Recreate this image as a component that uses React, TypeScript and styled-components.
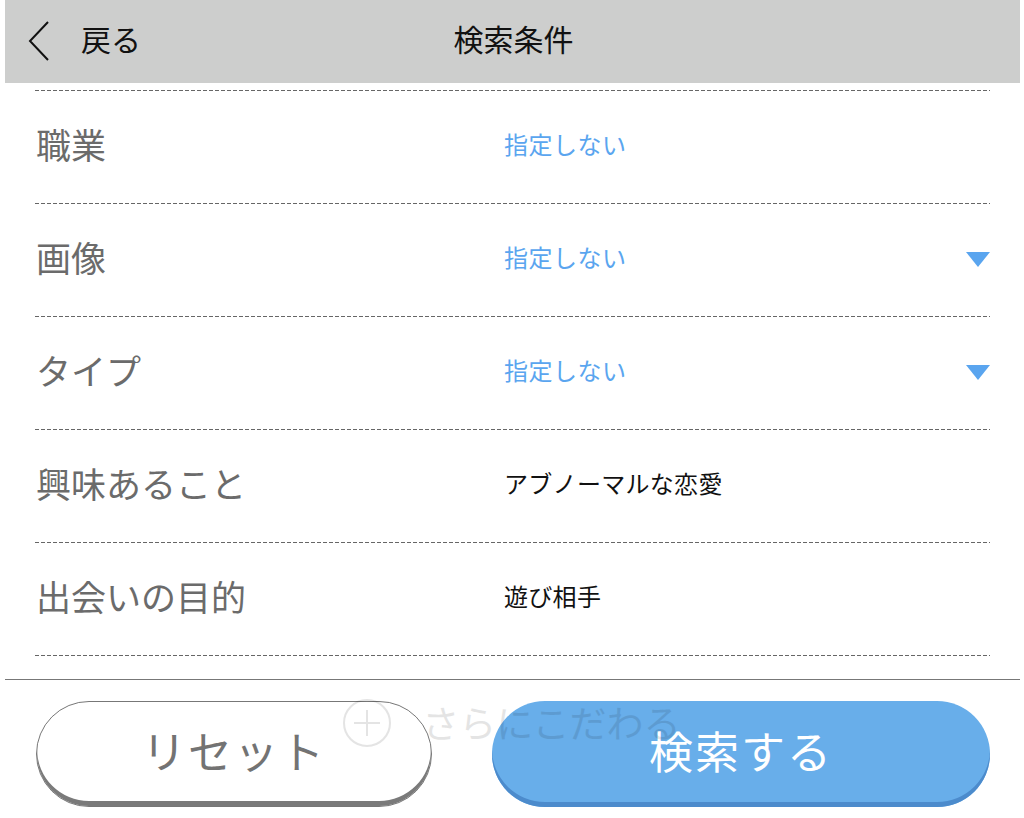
import * as React from "react";
import styled, { createGlobalStyle } from "styled-components";

const GlobalStyle = createGlobalStyle`
  html, body {
    margin: 0;
    padding: 0;
    background: #ffffff;
  }
  body {
    font-family: "Noto Sans CJK JP", "Noto Sans", sans-serif;
  }
`;

const Page = styled.div`
  position: relative;
  width: 1015px;
  margin-left: 5px;
  height: 818px;
  overflow: hidden;
`;

const Header = styled.header`
  height: 83px;
  box-sizing: border-box;
  padding-bottom: 7px;
  background: #cdcecd;
  display: grid;
  grid-template-columns: 1fr auto 1fr;
  align-items: center;
`;

const BackButton = styled.button`
  display: flex;
  align-items: center;
  gap: 30px;
  border: none;
  background: none;
  padding: 0 0 0 22px;
  font-family: inherit;
  font-size: 30px;
  color: #111;
  cursor: pointer;
  justify-self: start;
  svg {
    margin-top: 6px;
  }
`;

const Title = styled.h1`
  margin: 0;
  font-size: 30px;
  font-weight: 400;
  color: #111;
  transform: translateX(1px);
`;

const List = styled.div`
  padding: 7px 30px 0 30px;
`;

const Row = styled.div`
  display: grid;
  grid-template-columns: 469px 1fr auto;
  align-items: center;
  height: 112px;
  box-sizing: content-box;
  background-image: repeating-linear-gradient(
    to right,
    #666666 0,
    #666666 4px,
    transparent 4px,
    transparent 6px
  );
  background-size: 100% 1px;
  background-repeat: no-repeat;
  background-position: top left;
  padding-top: 1px;
  & > * {
    margin-bottom: 7px;
  }
  &:last-child {
    height: 0;
  }
`;

const Label = styled.span`
  padding-left: 1px;
  font-size: 35px;
  color: #6b6b6b;
`;

const Value = styled.span<{ $accent?: boolean }>`
  font-size: 24px;
  color: ${(p) => (p.$accent ? "#5aa5ef" : "#111")};
  letter-spacing: ${(p) => (p.$accent ? "0.5px" : "0.3px")};
`;

const Caret = styled.svg`
  display: block;
  margin-top: 6px;
`;

const Footer = styled.div`
  margin-top: 23px;
  border-top: 1.5px solid #777;
  display: flex;
  justify-content: space-between;
  padding: 21px 30px 0 31px;
`;

const PillButton = styled.button<{ $primary?: boolean }>`
  height: 106px;
  width: ${(p) => (p.$primary ? "498px" : "396px")};
  border-radius: 53px;
  font-family: inherit;
  font-size: 44px;
  letter-spacing: 2px;
  cursor: pointer;
  display: flex;
  align-items: center;
  justify-content: center;
  padding: 0 0 9px 0;
  ${(p) =>
    p.$primary
      ? `
    background: #68aeea;
    color: #ffffff;
    border: none;
    box-shadow: inset 0 -5px 0 #4c8bcc;
  `
      : `
    background: #ffffff;
    color: #737373;
    border: 1.5px solid #777;
    box-shadow: inset 0 -5px 0 #7a7a7a;
  `}
`;

const MoreOverlay = styled.div`
  position: absolute;
  left: 0;
  right: 0;
  top: 697px;
  display: flex;
  justify-content: center;
  align-items: center;
  gap: 30px;
  font-size: 37px;
  color: #000;
  opacity: 0.1;
  pointer-events: none;
  transform: translateX(-1px);
  span {
    margin-top: -2px;
  }
`;

const rows: { label: string; value: string; accent?: boolean; caret?: boolean }[] = [
  { label: "職業", value: "指定しない", accent: true },
  { label: "画像", value: "指定しない", accent: true, caret: true },
  { label: "タイプ", value: "指定しない", accent: true, caret: true },
  { label: "興味あること", value: "アブノーマルな恋愛" },
  { label: "出会いの目的", value: "遊び相手" },
];

const ChevronLeft = () => (
  <svg width="24" height="42" viewBox="0 0 24 42">
    <path d="M21 2 L3 21 L21 40" fill="none" stroke="#111" strokeWidth="2" />
  </svg>
);

const App = () => {
  return (
    <Page>
      <GlobalStyle />
      <Header>
        <BackButton>
          <ChevronLeft />
          <span>戻る</span>
        </BackButton>
        <Title>検索条件</Title>
        <div />
      </Header>
      <List>
        {rows.map((r) => (
          <Row key={r.label}>
            <Label>{r.label}</Label>
            <Value $accent={r.accent}>{r.value}</Value>
            {r.caret ? (
              <Caret width="24" height="15" viewBox="0 0 24 15">
                <path d="M0 0 H24 L12 15 Z" fill="#5aa5ef" />
              </Caret>
            ) : (
              <span />
            )}
          </Row>
        ))}
        <Row />
      </List>
      <Footer>
        <PillButton>リセット</PillButton>
        <PillButton $primary>検索する</PillButton>
      </Footer>
      <MoreOverlay>
        <svg width="50" height="50" viewBox="0 0 50 50">
          <circle cx="25" cy="25" r="23" fill="none" stroke="#000" strokeWidth="2" />
          <path d="M25 12 V38 M12 25 H38" stroke="#000" strokeWidth="2" />
        </svg>
        <span>さらにこだわる</span>
      </MoreOverlay>
    </Page>
  );
};

export default App;
